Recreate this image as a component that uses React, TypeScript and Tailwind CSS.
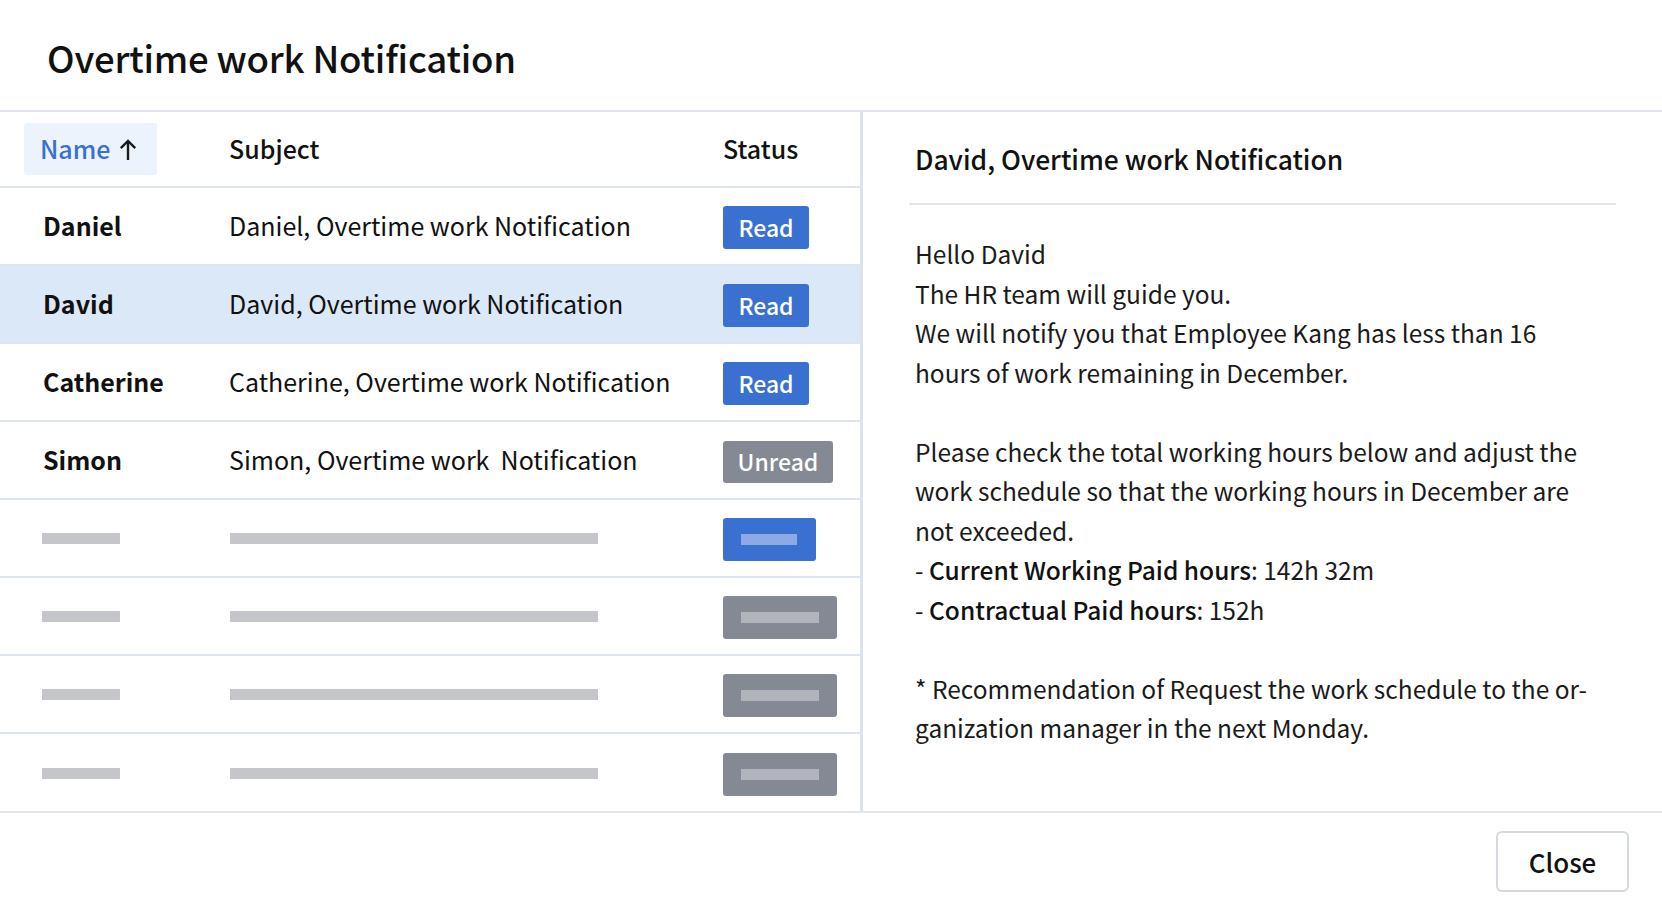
const font = { fontFamily: '"Noto Sans CJK KR", "Noto Sans", sans-serif' }

type Row = { name: string; subject: string; status: 'Read' | 'Unread'; selected?: boolean }

const rows: Row[] = [
  { name: 'Daniel', subject: 'Daniel, Overtime work Notification', status: 'Read' },
  { name: 'David', subject: 'David, Overtime work Notification', status: 'Read', selected: true },
  { name: 'Catherine', subject: 'Catherine, Overtime work Notification', status: 'Read' },
  { name: 'Simon', subject: 'Simon, Overtime work\u00a0 Notification', status: 'Unread' },
]

const placeholders: ('blue' | 'gray')[] = ['blue', 'gray', 'gray', 'gray']

function SortArrow() {
  return (
    <svg width="18" height="21" viewBox="0 0 18 21" fill="none" stroke="#1a1a1a" strokeWidth="2.4" strokeLinecap="butt">
      <path d="M9 21V2" />
      <path d="M1.8 9.2L9 2l7.2 7.2" />
    </svg>
  )
}

function StatusBadge({ status }: { status: 'Read' | 'Unread' }) {
  return status === 'Read' ? (
    <span className="flex h-[43px] w-[86px] items-center justify-center rounded-[3px] bg-[#3a70cf] text-[23px] font-medium text-white">
      Read
    </span>
  ) : (
    <span className="flex h-[42px] w-[110px] items-center justify-center rounded-[3px] bg-[#858994] text-[23px] font-medium text-white">
      Unread
    </span>
  )
}

export default function App() {
  return (
    <div className="flex h-[916px] w-full flex-col bg-white text-[#111]" style={font}>
      <div className="flex h-[112px] shrink-0 items-center border-b-2 border-[#e0e5ed] pl-[47px] pt-[6px]">
        <h1 className="text-[36.6px] font-medium tracking-[-0.2px]">Overtime work Notification</h1>
      </div>

      <div className="flex h-[701px] shrink-0 border-b-2 border-[#e0e5ed]">
        {/* list */}
        <div className="w-[863px] shrink-0 border-r-[3px] border-[#dde3ec]">
          <div className="grid h-[76px] grid-cols-[229px_494px_1fr] items-center border-b-2 border-[#dfe5ef]">
            <div className="pl-[24px]">
              <div className="flex h-[52px] w-[133px] items-center gap-[9px] rounded-[3px] bg-[#ecf3fd] pl-[16px] text-[25px] font-medium text-[#3a70cf]">
                Name
                <SortArrow />
              </div>
            </div>
            <div className="text-[25px] font-medium">Subject</div>
            <div className="text-[25px] font-medium">Status</div>
          </div>

          {rows.map((r) => (
            <div
              key={r.name}
              className={`grid h-[78px] grid-cols-[229px_494px_1fr] items-center border-b-2 border-[#dfe5ef] ${
                r.selected ? 'bg-[#dbe8f8]' : ''
              }`}
            >
              <div className="pl-[43px] text-[25px] font-bold">{r.name}</div>
              <div className="text-[25px] whitespace-pre">{r.subject}</div>
              <div className="pt-[3px]">
                <StatusBadge status={r.status} />
              </div>
            </div>
          ))}

          {placeholders.map((p, i) => (
            <div
              key={i}
              className={`grid h-[78px] grid-cols-[229px_494px_1fr] items-center ${
                i < placeholders.length - 1 ? 'border-b-2 border-[#dfe5ef]' : ''
              }`}
            >
              <div className="pl-[42px]">
                <div className="h-[11px] w-[78px] bg-[#c4c6ca]" />
              </div>
              <div className="pl-px">
                <div className="h-[11px] w-[368px] bg-[#c4c6ca]" />
              </div>
              <div className="pt-[3px]">
                {p === 'blue' ? (
                  <div className="flex h-[43px] w-[93px] items-center pl-[18px] rounded-[3px] bg-[#3a70cf]">
                    <div className="h-[11px] w-[56px] bg-[#8eaae6]" />
                  </div>
                ) : (
                  <div className="flex h-[43px] w-[114px] items-center pl-[18px] rounded-[3px] bg-[#858994]">
                    <div className="h-[11px] w-[78px] bg-[#b1b4bb]" />
                  </div>
                )}
              </div>
            </div>
          ))}
        </div>

        {/* detail */}
        <div className="flex-1 pl-[46px] pr-[46px]">
          <div className="flex h-[93px] items-center border-b-2 border-[#e0e5ed] pl-[6px] pt-[2px]">
            <h2 className="text-[26.4px] font-medium">David, Overtime work Notification</h2>
          </div>
          <div className="pl-[6px] pt-[29px] text-[24.5px] leading-[39.5px] text-[#1a1a1a] whitespace-nowrap">
            <div>Hello David</div>
            <div>The HR team will guide you.</div>
            <div>We will notify you that Employee Kang has less than 16</div>
            <div>hours of work remaining in December.</div>
            <div className="h-[39.5px]" />
            <div>Please check the total working hours below and adjust the</div>
            <div>work schedule so that the working hours in December are</div>
            <div>not exceeded.</div>
            <div>
              - <span className="font-medium text-[#111]">Current Working Paid hours</span>: 142h 32m
            </div>
            <div>
              - <span className="font-medium text-[#111]">Contractual Paid hours</span>: 152h
            </div>
            <div className="h-[39.5px]" />
            <div>* Recommendation of Request the work schedule to the or-</div>
            <div>ganization manager in the next Monday.</div>
          </div>
        </div>
      </div>

      <div className="flex flex-1 justify-end pr-[33px] pt-[18px]">
        <button className="h-[61px] w-[133px] rounded-[6px] border-2 border-[#d5dae2] bg-white text-[26px] font-medium text-[#111]">
          Close
        </button>
      </div>
    </div>
  )
}
